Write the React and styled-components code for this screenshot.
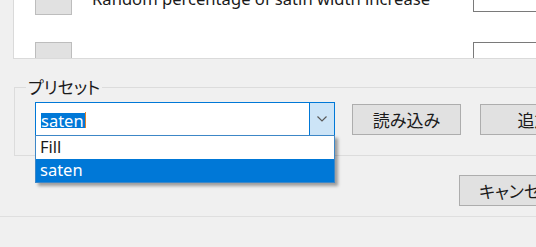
import React from 'react';
import styled, { createGlobalStyle } from 'styled-components';

const GlobalStyle = createGlobalStyle`
  html, body {
    margin: 0;
    padding: 0;
    background: #f0f0f0;
  }
  body {
    font-family: 'Noto Sans', 'Noto Sans CJK JP', sans-serif;
    color: #000;
  }
`;

const Screen = styled.div`
  width: 536px;
  height: 247px;
  overflow: hidden;
  background: #f0f0f0;
`;

const ListPanel = styled.div`
  margin: 0 -40px 0 13px;
  height: 59px;
  box-sizing: border-box;
  background: #fff;
  border-left: 1px solid #dadada;
  border-bottom: 1px solid #dadada;
  overflow: hidden;
`;

const ListInner = styled.div`
  margin-top: -10px;
  padding: 0 23px 0 21px;
`;

const OptionRow = styled.div`
  display: flex;
  align-items: flex-start;
  height: 52px;
`;

const Swatch = styled.div`
  width: 37px;
  height: 25px;
  box-sizing: border-box;
  background: #e1e1e1;
  border: 1px solid #bdbdbd;
  flex: none;
`;

const RowLabel = styled.div`
  margin: -1px 0 0 20px;
  font-size: 16.6px;
  line-height: 20px;
  color: #1a1a1a;
  white-space: nowrap;
`;

const NumBox = styled.div`
  margin-left: auto;
  width: 80px;
  height: 22px;
  box-sizing: border-box;
  background: #fff;
  border: 1px solid #7a7a7a;
  flex: none;
`;

const GroupBox = styled.div`
  margin: 28px -30px 0 14px;
  height: 69px;
  box-sizing: border-box;
  border: 1px solid #dcdcdc;
`;

const Legend = styled.div`
  width: fit-content;
  margin: -11px 0 0 11px;
  padding: 0 2px;
  background: #f0f0f0;
  font-family: 'Noto Sans CJK JP', sans-serif;
  font-feature-settings: 'palt';
  font-size: 17px;
  line-height: 20px;
  color: #1a1a1a;
`;

const PresetRow = styled.div`
  display: flex;
  align-items: center;
  margin-top: 5px;
  padding-left: 20px;
`;

const Combo = styled.div`
  position: relative;
  width: 300px;
  height: 34px;
  box-sizing: border-box;
  border: 1px solid #0078d7;
  background: #fff;
  display: flex;
  flex: none;
`;

const ComboText = styled.div`
  flex: 1;
  display: flex;
  align-items: center;
  padding: 2px 0 0 5px;
`;

const Selected = styled.span`
  background: #0078d7;
  color: #fff;
  font-size: 16.5px;
  line-height: 15px;
  height: 15px;
  padding-right: 1px;
`;

const Caret = styled.span`
  width: 1px;
  height: 16px;
  background: #e0822a;
`;

const ArrowButton = styled.div`
  width: 24px;
  border-left: 1px solid #0078d7;
  background: #cce4f7;
  display: flex;
  align-items: center;
  justify-content: center;
`;

const DropList = styled.div`
  position: absolute;
  left: -1px;
  top: 32px;
  width: 300px;
  box-sizing: border-box;
  border: 1px solid #3d87c7;
  background: #fff;
  box-shadow: 3px 3px 3px rgba(0, 0, 0, 0.35);
  z-index: 2;
`;

const ListItem = styled.div`
  height: 23px;
  padding-left: 4px;
  font-size: 16.5px;
  line-height: 22px;
  background: ${(p) => (p.active ? '#0078d7' : '#fff')};
  color: ${(p) => (p.active ? '#fff' : '#1a1a1a')};
`;

const Button = styled.div`
  width: ${(p) => p.w || 109}px;
  height: 31px;
  margin-left: ${(p) => p.gap || 0}px;
  box-sizing: border-box;
  background: #e1e1e1;
  border: 1px solid #adadad;
  display: flex;
  align-items: center;
  justify-content: center;
  font-family: 'Noto Sans CJK JP', sans-serif;
  font-feature-settings: 'palt';
  font-size: 17px;
  color: #1a1a1a;
  flex: none;
`;

const Footer = styled.div`
  display: flex;
  justify-content: flex-end;
  margin: 19px -40px 0 0;
`;

const Separator = styled.div`
  margin-top: 10px;
  border-top: 1px solid #dfdfdf;
`;

function Chevron() {
  return (
    <svg width="10" height="6" viewBox="0 0 10 6">
      <path d="M0.5 0.5 L5 5 L9.5 0.5" fill="none" stroke="#5a5a5a" strokeWidth="1.2" />
    </svg>
  );
}

export default function App() {
  return (
    <Screen>
      <GlobalStyle />
      <ListPanel>
        <ListInner>
          <OptionRow>
            <Swatch />
            <RowLabel>Random percentage of satin width increase</RowLabel>
            <NumBox />
          </OptionRow>
          <OptionRow>
            <Swatch />
            <NumBox />
          </OptionRow>
        </ListInner>
      </ListPanel>
      <GroupBox>
        <Legend>プリセット</Legend>
        <PresetRow>
          <Combo>
            <ComboText>
              <Selected>saten</Selected>
              <Caret />
            </ComboText>
            <ArrowButton>
              <Chevron />
            </ArrowButton>
            <DropList>
              <ListItem>Fill</ListItem>
              <ListItem active>saten</ListItem>
            </DropList>
          </Combo>
          <Button gap={17}>読み込み</Button>
          <Button gap={19}>追加</Button>
        </PresetRow>
      </GroupBox>
      <Footer>
        <Button w={117}>キャンセル</Button>
      </Footer>
      <Separator />
    </Screen>
  );
}
